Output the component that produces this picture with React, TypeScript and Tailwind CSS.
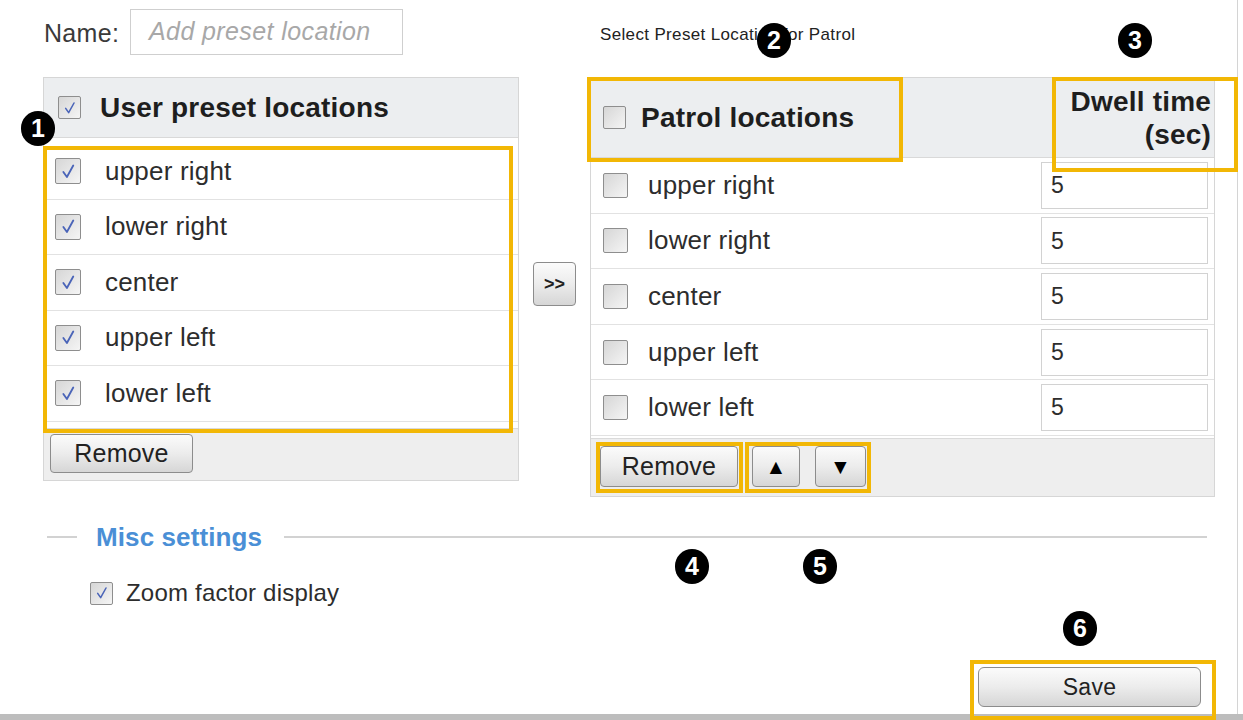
import React from "react";

const Check = ({ checked, size = 24 }: { checked?: boolean; size?: number }) => (
  <span
    className="inline-flex items-center justify-center shrink-0 border border-[#8e8e8e] rounded-[2px] bg-gradient-to-br from-[#d6d6d6] to-[#f5f5f5]"
    style={{ width: size, height: size }}
  >
    {checked && (
      <svg viewBox="0 0 24 24" width={size - 7} height={size - 7}>
        <path d="M5.5 12.5 L10 19 L18 4.5" fill="none" stroke="#4a64b8" strokeWidth="2.3" strokeLinecap="round" strokeLinejoin="round" />
      </svg>
    )}
  </span>
);

const Btn = ({ children, className }: { children: React.ReactNode; className: string }) => (
  <div
    className={
      "flex items-center justify-center border border-[#8c8c8c] rounded-[4px] bg-gradient-to-b from-[#fbfbfb] via-[#ececec] to-[#d6d6d6] text-[#222] " +
      className
    }
  >
    {children}
  </div>
);

const Badge = ({ n, className }: { n: string; className: string }) => (
  <div
    className={
      "absolute w-[34px] h-[35px] rounded-full bg-black text-white flex items-center justify-center text-[25px] font-bold " +
      className
    }
  >
    {n}
  </div>
);

const Yellow = ({ className }: { className: string }) => (
  <div className={"absolute border-[4px] border-[#f2b705] pointer-events-none " + className} />
);

const locs = ["upper right", "lower right", "center", "upper left", "lower left"];

export default function App() {
  return (
    <div className="relative w-[1243px] h-[720px] bg-white overflow-hidden font-['Liberation_Sans',Arial,sans-serif] text-[#2d2d2d]">
      <div className="flex flex-col h-full">
        <div className="flex h-[714px]">
          <div className="w-[1238px] border-r border-[#d4d4d4] flex flex-col pl-[43px]">
            {/* Top row */}
            <div className="flex items-start pt-[9px] h-[55px]">
              <div className="w-[87px] pt-[10px] pl-[1px] text-[25px] tracking-[0.3px] text-[#3a3a3a] leading-[28px]">Name:</div>
              <div className="w-[273px] h-[46px] border border-[#cfcfcf] flex items-center pl-[18px] text-[25px] tracking-[0.4px] italic text-[#a8a8a8]">
                Add preset location
              </div>
              <div className="ml-[197px] pt-[16px] text-[17px] tracking-[0.35px] text-[#222] leading-[20px]">
                Select Preset Location for Patrol
              </div>
            </div>

            {/* Panels */}
            <div className="flex mt-[22px] items-start">
              {/* Left panel */}
              <div className="w-[476px] h-[404px] border border-[#d6d6d6] flex flex-col">
                <div className="h-[60px] shrink-0 bg-[#eceef0] border-b border-[#d9d9d9] flex items-center pl-[14px]">
                  <Check checked size={23} />
                  <span className="ml-[19px] text-[28px] tracking-[0.2px] font-bold text-[#1e1e1e]">User preset locations</span>
                </div>
                <div className="pt-[6px] flex flex-col">
                  {locs.map((l) => (
                    <div key={l} className="h-[55.5px] border-b border-[#e2e2e2] flex items-center pl-[11px]">
                      <Check checked size={26} />
                      <span className="ml-[24px] text-[26px] tracking-[0.2px]">{l}</span>
                    </div>
                  ))}
                </div>
                <div className="mt-auto h-[52px] bg-[#eeeeee] border-t border-[#dadada] pt-[5px] pl-[6px]">
                  <Btn className="w-[143px] h-[39px] text-[25px] tracking-[0.2px]">Remove</Btn>
                </div>
              </div>

              {/* >> */}
              <div className="w-[71px] pl-[14px] pt-[185px]">
                <Btn className="w-[43px] h-[44px] text-[18px] font-bold">&gt;&gt;</Btn>
              </div>

              {/* Right panel */}
              <div className="w-[625px] h-[420px] border border-[#d6d6d6] flex flex-col">
                <div className="h-[80px] shrink-0 bg-[#eceef0] border-b border-[#d9d9d9] flex items-center pl-[12px] pr-[3px]">
                  <Check size={23} />
                  <span className="ml-[15px] text-[28px] tracking-[0.2px] font-bold text-[#1e1e1e]">Patrol locations</span>
                  <div className="ml-auto text-right text-[28px] tracking-[0.2px] font-bold text-[#1e1e1e] leading-[33px]">
                    Dwell time
                    <br />
                    (sec)
                  </div>
                </div>
                <div className="flex flex-col">
                  {locs.map((l) => (
                    <div key={l} className="h-[55.6px] border-b border-[#e2e2e2] flex items-center pl-[12px] pr-[6px]">
                      <Check size={25} />
                      <span className="ml-[20px] text-[26px] tracking-[0.2px]">{l}</span>
                      <div className="ml-auto w-[167px] h-[47px] border border-[#d2d2d2] flex items-center pl-[9px] text-[23px]">
                        5
                      </div>
                    </div>
                  ))}
                </div>
                <div className="mt-auto h-[58px] bg-[#eeeeee] border-t border-[#dadada] flex items-start pt-[7px] pl-[9px]">
                  <Btn className="w-[138px] h-[41px] text-[25px] tracking-[0.2px]">Remove</Btn>
                  <Btn className="ml-[14px] w-[48px] h-[41px] text-[21px] text-black">▲</Btn>
                  <Btn className="ml-[15px] w-[51px] h-[41px] text-[21px] text-black">▼</Btn>
                </div>
              </div>
            </div>

            {/* Misc settings */}
            <div className="flex items-center mt-[25px] h-[30px]">
              <div className="ml-[4px] w-[30px] h-[2px] bg-[#d2d2d2]" />
              <span className="ml-[19px] text-[26px] tracking-[0.1px] font-bold text-[#4a8fd6]">Misc settings</span>
              <div className="ml-[22px] w-[923px] h-[2px] bg-[#d2d2d2]" />
            </div>
            <div className="flex items-center mt-[29px] h-[24px] pl-[47px]">
              <Check checked size={23} />
              <span className="ml-[13px] text-[24px] tracking-[0.2px]">Zoom factor display</span>
            </div>

            {/* Save */}
            <div className="flex mt-[62px] pl-[935px]">
              <Btn className="w-[223px] h-[40px] text-[23px] tracking-[0.3px] rounded-[6px]">Save</Btn>
            </div>
          </div>
        </div>
        <div className="h-[6px] bg-[#bdbdbd]" />
      </div>

      {/* Annotation overlays */}
      <Yellow className="left-[43px] top-[146px] w-[470px] h-[287px]" />
      <Yellow className="left-[587px] top-[77px] w-[316px] h-[85px]" />
      <Yellow className="left-[1052px] top-[77px] w-[186px] h-[95px]" />
      <Yellow className="left-[596px] top-[442px] w-[147px] h-[51px]" />
      <Yellow className="left-[745px] top-[442px] w-[126px] h-[51px]" />
      <Yellow className="left-[970px] top-[660px] w-[246px] h-[60px]" />

      <Badge n="1" className="left-[21px] top-[111px]" />
      <Badge n="2" className="left-[757px] top-[23px]" />
      <Badge n="3" className="left-[1118px] top-[23px]" />
      <Badge n="4" className="left-[675px] top-[549px]" />
      <Badge n="5" className="left-[803px] top-[549px]" />
      <Badge n="6" className="left-[1063px] top-[611px]" />
    </div>
  );
}
